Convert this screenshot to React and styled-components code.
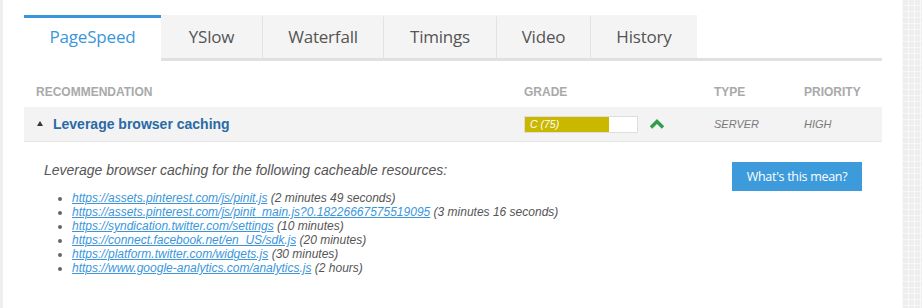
import React from "react";
import styled, { createGlobalStyle } from "styled-components";

const Global = createGlobalStyle`
  html, body { margin: 0; padding: 0; background: #fff; }
  body { font-family: "Liberation Sans", Arial, sans-serif; }
  * { box-sizing: border-box; }
`;

const Page = styled.div`
  display: flex;
  width: 922px;
  height: 308px;
  overflow: hidden;
`;

const LeftEdge = styled.div`
  width: 3px;
  background: #eeeeee;
`;

const RightEdge = styled.div`
  width: 20px;
  background-color: #eeeeee;
  background-image:
    linear-gradient(90deg, rgba(255,255,255,0.5) 1px, transparent 1px),
    linear-gradient(0deg, rgba(255,255,255,0.5) 1px, transparent 1px);
  background-size: 6px 6px;
`;

const Main = styled.div`
  flex: 1;
  padding: 15px 20px 0 21px;
  background: #fff;
`;

const TabBar = styled.div`
  display: flex;
  height: 46px;
`;

const Tab = styled.div`
  width: ${(p) => p.$w}px;
  height: 46px;
  display: flex;
  align-items: center;
  justify-content: center;
  font-family: "Open Sans", "Noto Sans", sans-serif;
  font-size: 17px;
  letter-spacing: -0.2px;
  color: ${(p) => (p.$active ? "#3a96dc" : "#555")};
  background: ${(p) => (p.$active ? "#fff" : "#f4f4f4")};
  border-top: 3px solid ${(p) => (p.$active ? "#3a96dc" : "transparent")};
  border-bottom: 3px solid ${(p) => (p.$active ? "#fff" : "#e0e0e0")};
  border-left: ${(p) => (p.$sep ? "1px solid #e2e2e2" : "none")};
  padding-bottom: 3px;
`;

const TabFill = styled.div`
  flex: 1;
  border-bottom: 3px solid #e0e0e0;
`;

const Grid = styled.div`
  display: grid;
  grid-template-columns: 500px 190px 90px 1fr;
  align-items: center;
`;

const HeadRow = styled(Grid)`
  padding-top: 24px;
  padding-bottom: 8px;
`;

const HeadCell = styled.div`
  font-size: 12px;
  line-height: 14px;
  font-weight: bold;
  color: #a9a9a9;
  padding-left: ${(p) => (p.$first ? "12px" : "0")};
`;

const Row = styled(Grid)`
  height: 35px;
  background: #f3f3f3;
  border-bottom: 1px solid #e6e6e6;
`;

const RecCell = styled.div`
  display: flex;
  align-items: center;
  padding-left: 13px;
  gap: 10px;
  font-size: 14px;
  font-weight: bold;
  color: #2a6aa6;
`;

const Caret = styled.span`
  width: 0;
  height: 0;
  border-left: 3.5px solid transparent;
  border-right: 3.5px solid transparent;
  border-bottom: 5px solid #333;
  margin-bottom: 1px;
`;

const GradeCell = styled.div`
  display: flex;
  align-items: center;
  gap: 11px;
`;

const Bar = styled.div`
  width: 114px;
  height: 17px;
  border: 1px solid #dedede;
  background: #fff;
  display: flex;
`;

const BarFill = styled.div`
  background: #c9b700;
  color: #fff;
  font-size: 10.5px;
  font-style: italic;
  line-height: 15px;
  padding-left: 5px;
`;

const Italic = styled.div`
  font-size: 11px;
  font-style: italic;
  color: #7a7a7a;
`;

const Details = styled.div`
  display: flex;
  justify-content: space-between;
  align-items: flex-start;
  padding: 18px 20px 0 20px;
`;

const Intro = styled.div`
  font-size: 14px;
  line-height: 20px;
  font-style: italic;
  color: #555;
`;

const List = styled.ul`
  margin: 11px 0 0 0;
  padding-left: 28px;
  font-size: 12px;
  line-height: 14px;
  font-style: italic;
  color: #555;
  li::marker { color: #666; }
`;

const Link = styled.a`
  color: #3a96dc;
  text-decoration: underline;
`;

const Button = styled.div`
  width: 130px;
  height: 29px;
  margin-top: 2px;
  background: #3d9bdc;
  color: #fff;
  font-family: "Open Sans", "Noto Sans", sans-serif;
  font-size: 12.5px;
  letter-spacing: -0.3px;
  display: flex;
  align-items: center;
  justify-content: center;
`;

const tabs = [
  { label: "PageSpeed", w: 137, active: true },
  { label: "YSlow", w: 101 },
  { label: "Waterfall", w: 121, sep: true },
  { label: "Timings", w: 113, sep: true },
  { label: "Video", w: 94, sep: true },
  { label: "History", w: 107, sep: true },
];

const resources = [
  ["https://assets.pinterest.com/js/pinit.js", "(2 minutes 49 seconds)"],
  ["https://assets.pinterest.com/js/pinit_main.js?0.18226667575519095", "(3 minutes 16 seconds)"],
  ["https://syndication.twitter.com/settings", "(10 minutes)"],
  ["https://connect.facebook.net/en_US/sdk.js", "(20 minutes)"],
  ["https://platform.twitter.com/widgets.js", "(30 minutes)"],
  ["https://www.google-analytics.com/analytics.js", "(2 hours)"],
];

export default function App() {
  return (
    <Page>
      <Global />
      <LeftEdge />
      <Main>
        <TabBar>
          {tabs.map((t) => (
            <Tab key={t.label} $w={t.w} $active={t.active} $sep={t.sep}>
              {t.label}
            </Tab>
          ))}
          <TabFill />
        </TabBar>
        <HeadRow>
          <HeadCell $first>RECOMMENDATION</HeadCell>
          <HeadCell>GRADE</HeadCell>
          <HeadCell>TYPE</HeadCell>
          <HeadCell>PRIORITY</HeadCell>
        </HeadRow>
        <Row>
          <RecCell>
            <Caret />
            Leverage browser caching
          </RecCell>
          <GradeCell>
            <Bar>
              <BarFill style={{ width: "75%" }}>C (75)</BarFill>
            </Bar>
            <svg width="16" height="10" viewBox="0 0 16 10">
              <path d="M2 8.5 L8 2.5 L14 8.5" fill="none" stroke="#2f9e4b" strokeWidth="3.4" />
            </svg>
          </GradeCell>
          <Italic>SERVER</Italic>
          <Italic>HIGH</Italic>
        </Row>
        <Details>
          <div>
            <Intro>Leverage browser caching for the following cacheable resources:</Intro>
            <List>
              {resources.map(([url, time]) => (
                <li key={url}>
                  <Link href="#">{url}</Link> {time}
                </li>
              ))}
            </List>
          </div>
          <Button>What's this mean?</Button>
        </Details>
      </Main>
      <RightEdge />
    </Page>
  );
}
